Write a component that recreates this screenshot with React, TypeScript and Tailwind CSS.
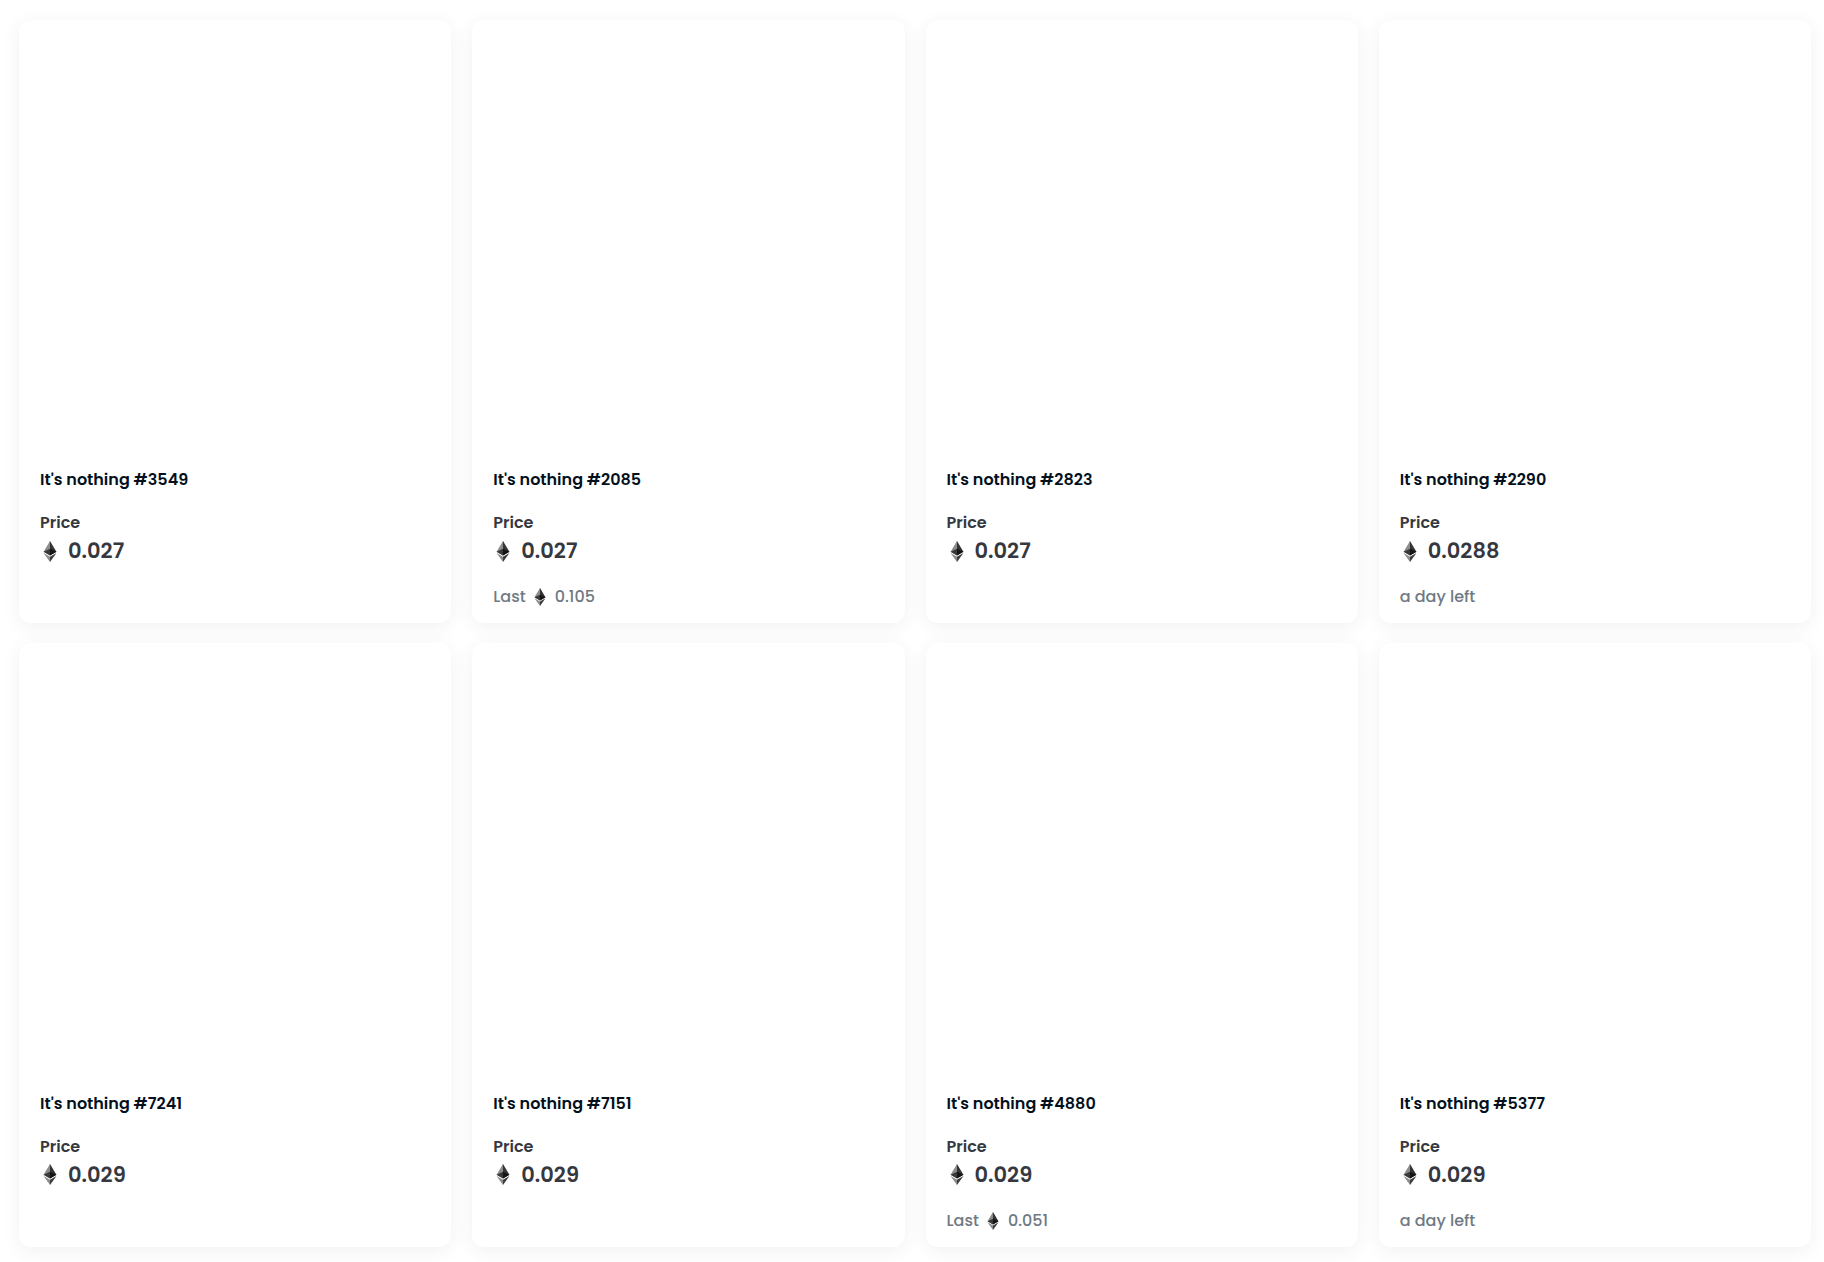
interface Listing {
  name: string;
  price: string;
  lastSale?: string;
  timeLeft?: string;
}

const listings: Listing[] = [
  { name: "It's nothing #3549", price: "0.027" },
  { name: "It's nothing #2085", price: "0.027", lastSale: "0.105" },
  { name: "It's nothing #2823", price: "0.027" },
  { name: "It's nothing #2290", price: "0.0288", timeLeft: "a day left" },
  { name: "It's nothing #7241", price: "0.029" },
  { name: "It's nothing #7151", price: "0.029" },
  { name: "It's nothing #4880", price: "0.029", lastSale: "0.051" },
  { name: "It's nothing #5377", price: "0.029", timeLeft: "a day left" },
];

function EthIcon({ className }: { className: string }) {
  return (
    <svg viewBox="0 0 256 417" className={className} role="img" aria-label="ETH">
      <path fill="#343434" d="M128 0l-3 10v275l3 3 128-76z" />
      <path fill="#8c8c8c" d="M128 0L0 212l128 76V154z" />
      <path fill="#3c3c3b" d="M128 312l-2 2v98l2 5 128-180z" />
      <path fill="#8c8c8c" d="M128 417V312L0 237z" />
      <path fill="#141414" d="M128 288l128-76-128-58z" />
      <path fill="#393939" d="M0 212l128 76V154z" />
    </svg>
  );
}

function ListingCard({ name, price, lastSale, timeLeft }: Listing) {
  return (
    <article className="rounded-xl bg-white shadow-[0_4px_20px_rgba(0,0,0,0.06)]">
      <div className="aspect-square" />
      <div className="px-[21px] pt-4 pb-[14px]">
        <h2 className="text-base leading-6 font-semibold text-[#04111d]">
          {name}
        </h2>
        <div className="mt-[19px] text-base leading-6 font-semibold text-[#353840]">
          Price
        </div>
        <div className="flex items-center gap-[10px] pl-[2px] text-[21px] leading-8 font-semibold text-[#353840]">
          <EthIcon className="h-[21px] w-4" />
          <span>{price}</span>
        </div>
        <div className="mt-[18px] flex h-6 items-center text-base leading-6 font-medium text-[#707a83]">
          {lastSale && (
            <>
              <span>Last</span>
              <EthIcon className="mr-[9px] ml-2 h-[18px] w-3" />
              <span>{lastSale}</span>
            </>
          )}
          {timeLeft && <span>{timeLeft}</span>}
        </div>
      </div>
    </article>
  );
}

export default function App() {
  return (
    <main className="grid grid-cols-4 gap-x-[21px] gap-y-5 bg-white pt-5 pr-[13px] pb-[15px] pl-[19px] font-[Poppins,Inter,sans-serif]">
      {listings.map((listing) => (
        <ListingCard key={listing.name} {...listing} />
      ))}
    </main>
  );
}
